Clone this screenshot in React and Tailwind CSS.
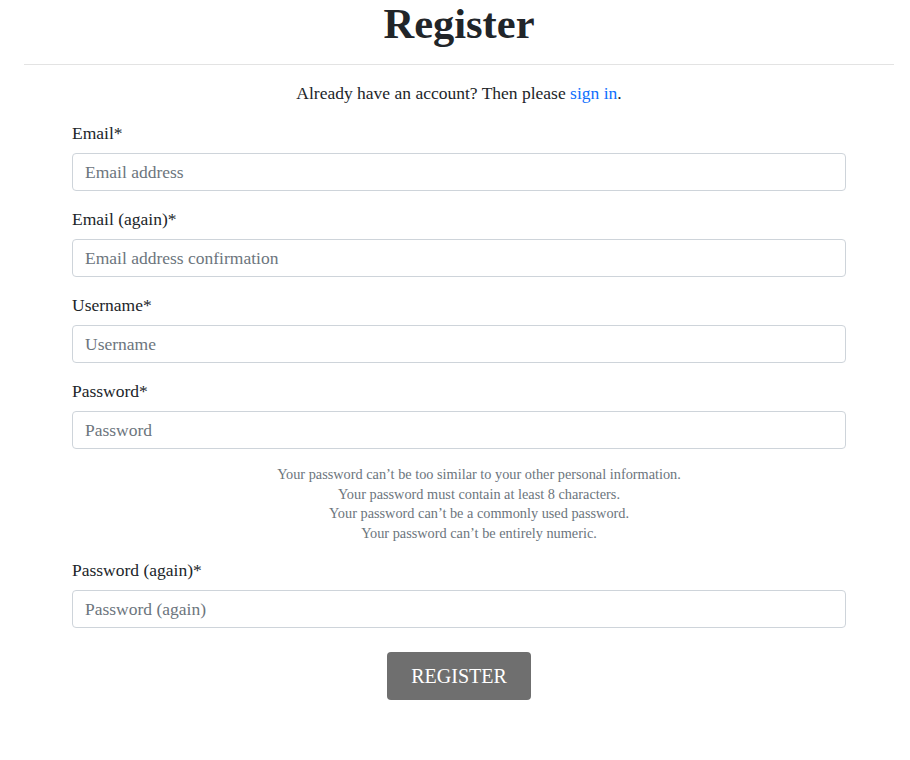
import { Fragment } from "react";

const fields = [
  { id: "email", label: "Email*", placeholder: "Email address", type: "email" },
  { id: "email2", label: "Email (again)*", placeholder: "Email address confirmation", type: "email" },
  { id: "username", label: "Username*", placeholder: "Username", type: "text" },
  { id: "password1", label: "Password*", placeholder: "Password", type: "password", help: true },
  { id: "password2", label: "Password (again)*", placeholder: "Password (again)", type: "password" },
];

const helpLines = [
  "Your password can’t be too similar to your other personal information.",
  "Your password must contain at least 8 characters.",
  "Your password can’t be a commonly used password.",
  "Your password can’t be entirely numeric.",
];

function App() {
  return (
    <div className="min-h-[760px] bg-white pl-6 pr-4 font-['Liberation_Serif',serif] text-[#212529]">
      <h1 className="text-center text-[42.5px] font-bold leading-[48px]">Register</h1>
      <hr className="mt-[16px] border-t border-[#e3e3e3]" />
      <p className="mt-[16px] text-center text-[17.5px] leading-6">
        Already have an account? Then please{" "}
        <a href="#" className="text-[#0d6efd]">
          sign in
        </a>
        .
      </p>
      <form className="mx-12 mt-[16px]">
        {fields.map((field) => (
          <Fragment key={field.id}>
            <div className="mb-[16px]">
              <label htmlFor={field.id} className="mb-2 block text-[17.5px] leading-6">
                {field.label}
              </label>
              <input
                id={field.id}
                type={field.type}
                placeholder={field.placeholder}
                className="block h-[38px] w-full rounded-[4px] border border-[#ced4da] px-3 text-[17.5px] placeholder:text-[#6c757d] focus:outline-none"
              />
              {field.help && (
                <ul className="mt-[16px] mb-[-1px] pl-10 text-center text-[14.3px] leading-[19.5px] text-[#6c757d]">
                  {helpLines.map((line) => (
                    <li key={line}>{line}</li>
                  ))}
                </ul>
              )}
            </div>
          </Fragment>
        ))}
        <div className="mt-[24px] flex justify-center">
          <button
            type="submit"
            className="h-[48px] w-[144px] rounded-[4px] bg-[#6f6f6f] text-[20px] text-white"
          >
            REGISTER
          </button>
        </div>
      </form>
    </div>
  );
}

export default App;
